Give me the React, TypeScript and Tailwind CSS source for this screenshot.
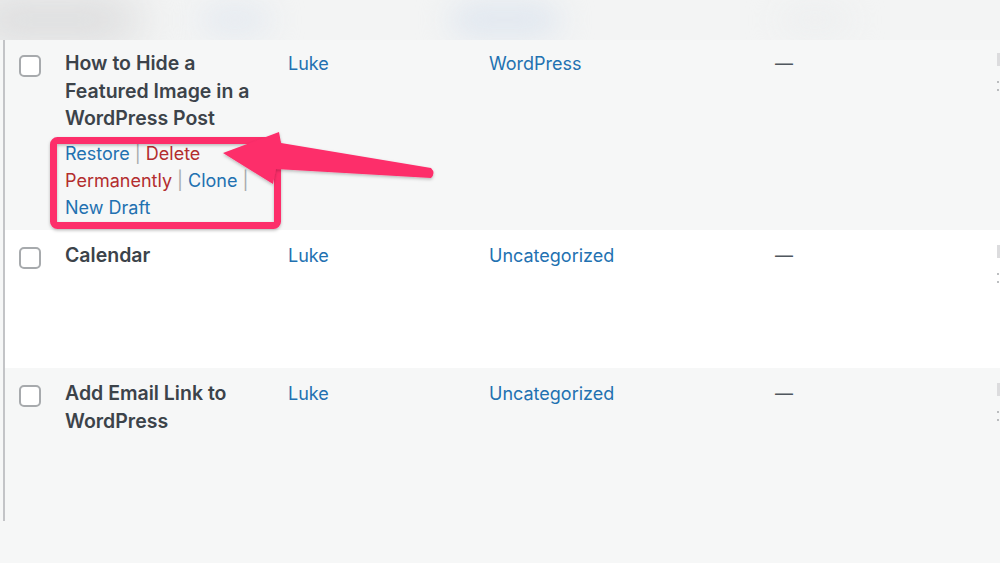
import React from 'react';

interface Post {
  title: string[];
  author: string;
  category: string;
  actions?: boolean;
  height: string;
  bg: string;
  pad: string;
}

const POSTS: Post[] = [
  {
    title: ['How to Hide a', 'Featured Image in a', 'WordPress Post'],
    author: 'Luke',
    category: 'WordPress',
    actions: true,
    height: 'h-[190px]',
    bg: 'bg-[#f6f7f7]',
    pad: 'pt-[10px]',
  },
  {
    title: ['Calendar'],
    author: 'Luke',
    category: 'Uncategorized',
    height: 'h-[138px]',
    bg: 'bg-white',
    pad: 'pt-[12px]',
  },
  {
    title: ['Add Email Link to', 'WordPress'],
    author: 'Luke',
    category: 'Uncategorized',
    height: 'h-[153px]',
    bg: 'bg-[#f6f7f7]',
    pad: 'pt-[12px]',
  },
];

const Sep = () => <span className="text-[#a7aaad] mx-[5px]">|</span>;

const RowActions = () => (
  <div className="mt-[7px] text-[18px] leading-[27px] font-normal">
    <div>
      <a className="text-[#2271b1]">Restore</a>
      <Sep />
      <a className="text-[#b32d2e]">Delete</a>
    </div>
    <div>
      <a className="text-[#b32d2e]">Permanently</a>
      <Sep />
      <a className="text-[#2271b1]">Clone</a>
      <Sep />
    </div>
    <div>
      <a className="text-[#2271b1]">New Draft</a>
    </div>
  </div>
);

const Row = ({ post }: { post: Post }) => (
  <div
    className={`grid grid-cols-[60px_223px_201px_286px_222px_1fr] ${post.height} ${post.bg} ${post.pad}`}
  >
    <div className="pl-[14px] pt-[5px]">
      <div className="w-[22px] h-[22px] rounded-[5px] border-2 border-[#a7aaad] bg-white" />
    </div>
    <div>
      <div className="text-[19.5px] leading-[27.5px] font-semibold text-[#3c434a]">
        {post.title.map((t) => (
          <div key={t}>{t}</div>
        ))}
      </div>
      {post.actions && <RowActions />}
    </div>
    <div className="text-[18px] leading-[27px] text-[#2271b1]">{post.author}</div>
    <div className="text-[18px] leading-[27px] text-[#2271b1]">{post.category}</div>
    <div className="text-[18px] leading-[27px] text-[#50575e]">—</div>
    {/* next column, cut off by the window edge */}
    <div className="flex flex-col items-start pt-[3px]">
      <div className="w-[3px] h-[13px] bg-[#dcdcde]" />
      <div className="mt-[15px] w-[2px] h-[2px] rounded-full bg-[#a7aaad]" />
      <div className="mt-[6px] w-[2px] h-[2px] rounded-full bg-[#a7aaad]" />
    </div>
  </div>
);

const Callout = () => (
  <svg
    className="absolute left-0 top-0 pointer-events-none"
    width="1000"
    height="563"
    viewBox="0 0 1000 563"
  >
    <defs>
      <filter id="sh" x="-10%" y="-10%" width="120%" height="130%">
        <feDropShadow dx="0" dy="1.5" stdDeviation="1.5" floodColor="#000" floodOpacity="0.25" />
      </filter>
    </defs>
    <rect
      x="53.5"
      y="140.5"
      width="224"
      height="85"
      rx="4"
      fill="none"
      stroke="#fd2d6b"
      strokeWidth="7"
      filter="url(#sh)"
    />
    <path
      d="M223 153 L279 132 L281 143 L431 168 Q436 173 431 178 L276 169 L273 184 Z"
      fill="#fd2d6b"
      strokeLinejoin="round"
      filter="url(#sh)"
    />
  </svg>
);

export default function App() {
  return (
    <div
      className="relative w-[1000px] h-[563px] overflow-hidden bg-[#f6f7f7]"
      style={{ fontFamily: 'Inter, "Noto Sans", sans-serif' }}
    >
      {/* blurred column header strip */}
      <div className="h-[40px] bg-[#f3f4f4] overflow-hidden flex items-center">
        <div className="shrink-0 w-[170px] h-[40px] -ml-[30px] rounded-full bg-[#d6d6d7] blur-xl" />
        <div className="shrink-0 w-[70px] h-[26px] ml-[60px] rounded-full bg-[#e2e8f0] blur-lg" />
        <div className="shrink-0 w-[110px] h-[30px] ml-[180px] rounded-full bg-[#dde5ef] blur-lg" />
        <div className="shrink-0 w-[70px] h-[26px] ml-[220px] rounded-full bg-[#eceeef] blur-lg" />
      </div>
      <div className="pl-[3px]">
        <div className="border-l-2 border-[#c3c4c7]">
          {POSTS.map((p) => (
            <Row key={p.title[0]} post={p} />
          ))}
        </div>
      </div>
      <Callout />
    </div>
  );
}
